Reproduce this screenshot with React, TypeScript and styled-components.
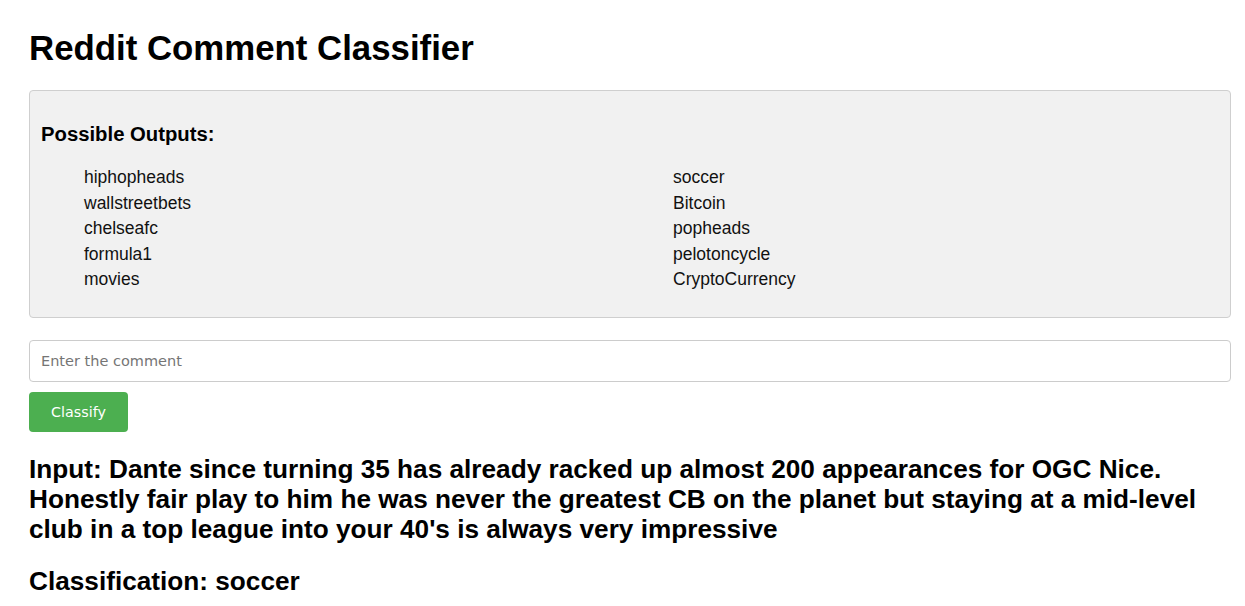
import React from "react";
import styled, { createGlobalStyle } from "styled-components";

const GlobalStyle = createGlobalStyle`
  html, body { margin: 0; padding: 0; background: #ffffff; }
  body { font-family: "Liberation Sans", Arial, sans-serif; color: #000; }
`;

const Page = styled.main`
  display: flex;
  flex-direction: column;
  padding: 28px 14px 0 29px;
`;

const Title = styled.h1`
  margin: 0 0 22px;
  font-size: 34.8px;
  line-height: 40px;
  font-weight: 700;
`;

const OutputsPanel = styled.section`
  background: #f1f1f1;
  border: 1px solid #cfcfcf;
  border-radius: 4px;
  padding: 32px 11px 24px;
`;

const PanelHeading = styled.h3`
  margin: 0 0 19px;
  font-size: 20.3px;
  line-height: 23px;
  font-weight: 700;
`;

const Columns = styled.div`
  display: grid;
  grid-template-columns: 1fr 1fr;
`;

const OutputList = styled.ul`
  list-style: none;
  margin: 0;
  padding: 0 0 0 43px;
`;

const OutputItem = styled.li`
  font-size: 17.5px;
  line-height: 25.5px;
  color: #111;
`;

const CommentInput = styled.input`
  margin-top: 22px;
  box-sizing: border-box;
  width: 100%;
  height: 42px;
  padding: 0 11px;
  border: 1px solid #cccccc;
  border-radius: 4px;
  font-family: "DejaVu Sans", sans-serif;
  font-size: 14.5px;
  color: #222;
  background: #fff;
  &::placeholder { color: #757575; }
`;

const ClassifyButton = styled.button`
  align-self: flex-start;
  margin-top: 10px;
  height: 40px;
  width: 99px;
  border: none;
  border-radius: 4px;
  background: #4caf50;
  color: #fff;
  font-family: "DejaVu Sans", sans-serif;
  font-size: 14.3px;
  cursor: pointer;
`;

const ResultText = styled.h2`
  margin: 22px 0 0;
  font-size: 26.2px;
  line-height: 30px;
  font-weight: 700;
`;

const left = ["hiphopheads", "wallstreetbets", "chelseafc", "formula1", "movies"];
const right = ["soccer", "Bitcoin", "popheads", "pelotoncycle", "CryptoCurrency"];

export default function App() {
  return (
    <>
      <GlobalStyle />
      <Page>
        <Title>Reddit Comment Classifier</Title>
        <OutputsPanel>
          <PanelHeading>Possible Outputs:</PanelHeading>
          <Columns>
            <OutputList>
              {left.map((s) => (
                <OutputItem key={s}>{s}</OutputItem>
              ))}
            </OutputList>
            <OutputList>
              {right.map((s) => (
                <OutputItem key={s}>{s}</OutputItem>
              ))}
            </OutputList>
          </Columns>
        </OutputsPanel>
        <CommentInput placeholder="Enter the comment" />
        <ClassifyButton>Classify</ClassifyButton>
        <ResultText>
          Input: Dante since turning 35 has already racked up almost 200 appearances for OGC Nice.
          Honestly fair play to him he was never the greatest CB on the planet but staying at a
          mid-level club in a top league into your 40's is always very impressive
        </ResultText>
        <ResultText>Classification: soccer</ResultText>
      </Page>
    </>
  );
}
